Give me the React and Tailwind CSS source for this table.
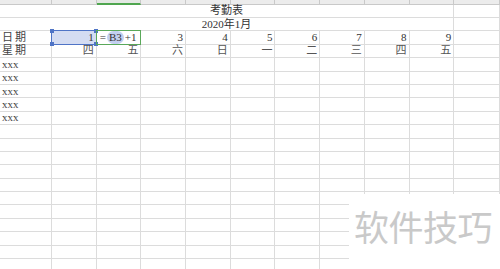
const cols = 11;
const weekdays = ["四", "五", "六", "日", "一", "二", "三", "四", "五"];
const cellBase =
  "border-r border-b border-[#dcdcdc] flex items-center px-[2px] text-[11px] leading-none whitespace-nowrap";

function Handle({ className }) {
  return <span className={`absolute size-[4px] bg-[#4f74c6] ${className}`} />;
}

function TitleRow({ text }) {
  return (
    <>
      <div className={`${cellBase} col-span-10 justify-center text-[#333]`}>{text}</div>
      <div className={cellBase} />
    </>
  );
}

export default function App() {
  const emptyRows = Array.from({ length: 11 });

  return (
    <div
      className="relative h-[269px] w-[500px] overflow-hidden bg-white"
      style={{ fontFamily: '"Liberation Serif", "Noto Sans CJK SC", serif' }}
    >
      <div className="grid grid-cols-[52px_repeat(9,44.7px)_1fr] grid-rows-[4.6px_repeat(20,13.4px)]">
        {/* column headers */}
        {Array.from({ length: cols }).map((_, i) => (
          <div
            key={`h${i}`}
            className={
              i === 2
                ? "border-r border-b-2 border-r-[#c9c9c9] border-b-[#4fa64f] bg-[#e3e8e3]"
                : "border-r border-b border-[#c9c9c9] bg-[#ececec]"
            }
          />
        ))}

        <TitleRow text="考勤表" />
        <TitleRow text="2020年1月" />

        {/* 日期 */}
        <div className={`${cellBase} text-[#444] tracking-[2px]`}>日期</div>
        <div className={`${cellBase} relative z-10 justify-end bg-[#d4dcf2] text-[#333]`}>
          1
          <div className="pointer-events-none absolute -left-px -top-px -right-px -bottom-px border border-[#4f74c6]">
            <Handle className="-left-[2px] -top-[2px]" />
            <Handle className="-right-[2px] -top-[2px]" />
            <Handle className="-bottom-[2px] -left-[2px]" />
            <Handle className="-bottom-[2px] -right-[2px]" />
          </div>
        </div>
        <div className={`${cellBase} relative z-10 text-[#333]`}>
          <div className="pointer-events-none absolute -left-px -top-px -right-px -bottom-px border-[1.5px] border-[#5aa85a]" />
          <span className="pl-[1px]">=</span>
          <span className="ml-[1px] rounded-full bg-[#c3cff0] px-[2px] py-[1px]">B3</span>
          <span className="ml-[1px]">+1</span>
          <span className="ml-[2px] h-[11px] w-px bg-[#222]" />
        </div>
        {[3, 4, 5, 6, 7, 8, 9].map((n) => (
          <div key={`d${n}`} className={`${cellBase} justify-end text-[#333]`}>
            {n}
          </div>
        ))}
        <div className={cellBase} />

        {/* 星期 */}
        <div className={`${cellBase} text-[#444] tracking-[2px]`}>星期</div>
        {weekdays.map((w, i) => (
          <div key={`w${i}`} className={`${cellBase} justify-end text-[#555]`}>
            {w}
          </div>
        ))}
        <div className={cellBase} />

        {/* names */}
        {Array.from({ length: 5 }).map((_, r) => (
          <div key={`x${r}`} className="contents">
            <div className={`${cellBase} text-[#444]`}>xxx</div>
            {Array.from({ length: 10 }).map((_, c) => (
              <div key={c} className={cellBase} />
            ))}
          </div>
        ))}

        {emptyRows.map((_, r) => (
          <div key={`e${r}`} className="contents">
            {Array.from({ length: cols }).map((_, c) => (
              <div key={c} className={cellBase} />
            ))}
          </div>
        ))}
      </div>

      {/* watermark */}
      <div
        className="absolute left-[349px] top-[194px] h-[75px] w-[151px] bg-white pl-[5px] pt-[14px] text-[35px] leading-none tracking-[-0.5px] text-[#c9c9c9]"
        style={{ fontFamily: '"Noto Sans CJK SC", sans-serif' }}
      >
        软件技巧
      </div>
    </div>
  );
}
